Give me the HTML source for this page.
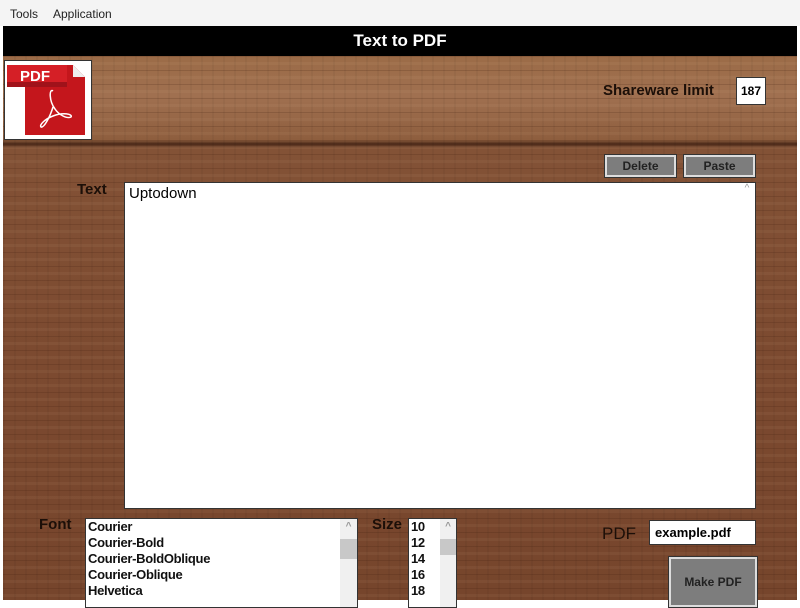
<!DOCTYPE html>
<html><head><style>
*{margin:0;padding:0;box-sizing:border-box}
body{width:800px;height:600px;overflow:hidden;background:#fff;font-family:"Liberation Sans",sans-serif;position:relative}
.a{position:absolute}
#menu{left:0;top:0;width:800px;height:26px;background:#f4f4f4;font-size:12px;color:#222}
#title{left:3px;top:26px;width:794px;height:30px;background:#000;color:#fff;font-weight:bold;font-size:17px;text-align:center;line-height:30px}
#wood{left:3px;top:56px;width:794px;height:544px;
background:
repeating-linear-gradient(180deg,rgba(60,25,10,.18) 0 1px,transparent 1px 6px,rgba(255,220,180,.05) 6px 9px,transparent 9px 14px),
repeating-linear-gradient(90deg,rgba(0,0,0,.04) 0 2px,transparent 2px 11px),
linear-gradient(180deg,#9b6b47 0,#a07050 40px,#8e5e3e 84px,#4a2818 88px,#835236 92px,#7c4a30 300px,#76452c 544px)}
.lbl{font-weight:bold;color:#1c0f08;font-size:15px}
.btn{background:#7d7d7d;border:2px solid #ddd;outline:1px solid #333;font-weight:bold;font-size:12px;color:#222;text-align:center}
.box{background:#fff;border:1px solid #333}
.sb{position:absolute;right:0;top:0;width:16px;height:100%;background:#f0f0f0;color:#999;font-size:10px;text-align:center;letter-spacing:0}
.list{font-size:13px;letter-spacing:-0.3px;line-height:16px;font-weight:bold;color:#111;padding-left:2px}
</style></head><body>
<div id="menu" class="a"><span class="a" style="left:10px;top:7px">Tools</span><span class="a" style="left:53px;top:7px">Application</span></div>
<div id="title" class="a">Text to PDF</div>
<div id="wood" class="a"></div>
<div class="a box" style="left:4px;top:60px;width:88px;height:80px">
<svg width="86" height="78" viewBox="0 0 86 78">
<path d="M20 4 H68 L80 16 V74 H20 Z" fill="#c4161c"/>
<path d="M68 4 L80 16 H68 Z" fill="#eee"/>
<rect x="2" y="4" width="60" height="22" fill="#d51f26"/>
<rect x="2" y="21" width="60" height="5" fill="#a0121a"/>
<text x="15" y="20" font-family="Liberation Sans" font-weight="bold" font-size="15" fill="#fff">PDF</text>
<path d="M48 30 C44 27 44 40 50 48 C54 54 62 58 66 56 C68 53 58 51 48 55 C40 58 34 64 36 66 C39 67 45 56 48 46" fill="none" stroke="#fff" stroke-width="1.5"/>
</svg></div>
<div class="a lbl" style="left:603px;top:82px">Shareware limit</div>
<div class="a box" style="left:736px;top:77px;width:30px;height:28px;font-size:12px;font-weight:bold;text-align:center;line-height:26px">187</div>
<div class="a btn" style="left:605px;top:155px;width:71px;height:22px;line-height:18px">Delete</div>
<div class="a btn" style="left:684px;top:155px;width:71px;height:22px;line-height:18px">Paste</div>
<div class="a lbl" style="left:77px;top:181px">Text</div>
<div class="a box" style="left:124px;top:182px;width:632px;height:327px;font-size:15px;padding:2px 4px">Uptodown<div class="sb" style="background:#fff">^</div></div>
<div class="a lbl" style="left:39px;top:516px">Font</div>
<div class="a box list" style="left:85px;top:518px;width:273px;height:90px">Courier<br>Courier-Bold<br>Courier-BoldOblique<br>Courier-Oblique<br>Helvetica<div class="sb" style="width:17px">^<div style="background:#c8c8c8;height:20px;margin-top:4px"></div></div></div>
<div class="a lbl" style="left:372px;top:516px">Size</div>
<div class="a box list" style="left:408px;top:518px;width:49px;height:90px">10<br>12<br>14<br>16<br>18<div class="sb">^<div style="background:#c8c8c8;height:16px;margin-top:4px"></div></div></div>
<div class="a lbl" style="left:602px;top:524px;font-size:17px;font-weight:normal">PDF</div>
<div class="a box" style="left:649px;top:520px;width:107px;height:25px;font-size:13px;font-weight:bold;padding:4px 5px">example.pdf</div>
<div class="a btn" style="left:669px;top:557px;width:88px;height:50px;line-height:46px">Make PDF</div>
</body></html>
